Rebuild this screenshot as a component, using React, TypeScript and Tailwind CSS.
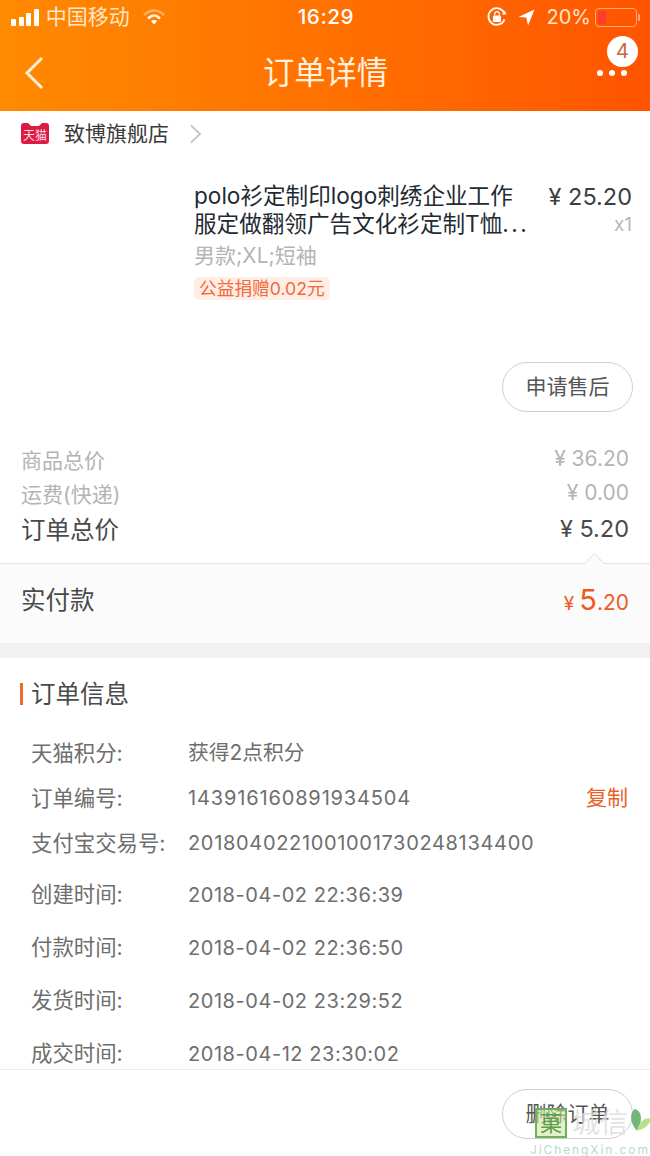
import React from "react";

const font = { fontFamily: '"Inter","Noto Sans CJK SC",sans-serif' };

function StatusBar() {
  return (
    <div className="flex h-[34px] items-center pl-[11px] pr-[10px] text-white">
      <div className="flex h-[18px] items-end gap-[2.6px]">
        <span className="h-[7px] w-[5px] rounded-[1px] bg-white" />
        <span className="h-[9px] w-[5px] rounded-[1px] bg-white" />
        <span className="h-[13px] w-[5px] rounded-[1px] bg-white" />
        <span className="h-[17px] w-[5px] rounded-[1px] bg-white" />
      </div>
      <span className="ml-[7px] text-[21px] leading-[24px] text-[#ffe6c8]">中国移动</span>
      <svg className="ml-[12px]" width="24" height="18" viewBox="0 0 24 18" fill="none">
        <path d="M2 7 C8 1 16 1 22 7" stroke="#ffb060" strokeWidth="2.5" />
        <path d="M6 10.5 C10 6.5 14 6.5 18 10.5" stroke="#fff3e0" strokeWidth="2.5" />
        <path d="M9 13 L12 16.5 L15 13 C13 11.5 11 11.5 9 13Z" fill="#fff" />
      </svg>
      <span className="ml-[132px] text-[20.7px] leading-[24px] font-medium tracking-[0.5px]">16:29</span>
      <div className="ml-auto flex items-center">
        <svg width="22" height="22" viewBox="0 0 22 22" fill="none">
          <path d="M18.5 13.5 A8.3 8.3 0 1 1 18 6.5" stroke="#fff" strokeWidth="1.8" />
          <path d="M20.5 8.5 H16 L18.8 4.8Z" fill="#fff" />
          <rect x="7" y="9.5" width="8" height="6.5" rx="1" fill="#fff" />
          <path d="M8.7 9.5 V8 a2.3 2.3 0 0 1 4.6 0 V9.5" stroke="#fff" strokeWidth="1.2" />
        </svg>
        <svg className="ml-[10px]" width="17" height="17" viewBox="0 0 17 17">
          <path d="M0.5 8 L16.5 0.5 L10 16.5 L8.3 8.6Z" fill="#fff" />
        </svg>
        <span className="ml-[12px] text-[20px] leading-[24px] text-[#ffe6c8]">20%</span>
        <div className="ml-[4px] flex items-center">
          <div className="flex h-[19px] w-[42px] items-stretch rounded-[4px] border border-[#ffa878] p-[2px]">
            <span className="w-[8px] rounded-[1px] bg-[#ff3b30]" />
          </div>
          <span className="ml-[1px] h-[7px] w-[2px] rounded-r-[1px] bg-[#ffa878]" />
        </div>
      </div>
    </div>
  );
}

function NavBar() {
  return (
    <div className="relative flex h-[77px] items-center justify-between pl-[24px] pr-[23px]">
      <div className="w-[30px]">
        <svg width="22" height="34" viewBox="0 0 22 34" fill="none">
          <path d="M18 2 L3 17 L18 32" stroke="#ffeedd" strokeWidth="3" />
        </svg>
      </div>
      <span className="text-[31.3px] leading-[40px] text-[#fff1df]">订单详情</span>
      <div className="relative flex w-[30px] gap-[6px]">
        <span className="h-[6px] w-[6px] rounded-full bg-white" />
        <span className="h-[6px] w-[6px] rounded-full bg-white" />
        <span className="h-[6px] w-[6px] rounded-full bg-white" />
        <span className="absolute left-[10px] top-[-34px] flex h-[31px] w-[31px] items-center justify-center rounded-full bg-white text-[20px] text-[#c8653a]">
          4
        </span>
      </div>
    </div>
  );
}

function TmallIcon() {
  return (
    <div className="relative flex h-[21px] w-[28px] items-end justify-center rounded-[3px] bg-[#dc1a42]">
      <span className="absolute left-[6px] top-[-1px] h-[4px] w-[16px] bg-white [clip-path:polygon(0_0,25%_100%,75%_100%,100%_0,100%_0,0_0)]" />
      <span className="text-[12px] leading-[17px] text-[#ffdbe2]">天猫</span>
    </div>
  );
}

function PriceRow({ label, value }: { label: string; value: string }) {
  return (
    <div className="flex h-[34px] items-center justify-between">
      <span className="pt-[3px] text-[21px] text-[#b4b4b4]">{label}</span>
      <span className="text-[21px] text-[#b4b4b4]">{value}</span>
    </div>
  );
}

function InfoRow({
  label,
  value,
  h,
  valueClass,
  action,
}: {
  label: string;
  value: string;
  h: string;
  valueClass: string;
  action?: string;
}) {
  return (
    <div className={`flex items-center ${h}`}>
      <span className="w-[157px] shrink-0 whitespace-nowrap text-[21.4px] text-[#6e6e6e]">{label}</span>
      <span className={`text-[#6e6e6e] ${valueClass}`}>{value}</span>
      {action && <span className="ml-auto text-[21px] text-[#e8622a]">{action}</span>}
    </div>
  );
}

const numberClass = "text-[20px] tracking-[0.85px]";
const longClass = "text-[20px] tracking-[0.67px]";
const dateClass = "text-[20px] tracking-[0.55px]";

export default function App() {
  return (
    <div className="relative h-[1156px] w-[650px] overflow-hidden bg-white" style={font}>
      <header className="h-[111px] bg-gradient-to-r from-[#ff8a00] to-[#ff5400]">
        <StatusBar />
        <NavBar />
      </header>

      <div className="flex h-[47px] items-center pb-[2px] pl-[21px]">
        <TmallIcon />
        <span className="ml-[15px] text-[21px] leading-[28px] text-[#3a3a3a]">致博旗舰店</span>
        <svg className="ml-[20px]" width="14" height="20" viewBox="0 0 14 20" fill="none">
          <path d="M2 1.5 L11 10 L2 18.5" stroke="#c8c8c8" strokeWidth="2" />
        </svg>
      </div>

      <div className="flex h-[204px] pl-[194px] pr-[18px] pt-[24px]">
        <div className="w-[345px]">
          <p className="whitespace-nowrap text-[22.6px] leading-[28px] text-[#1f2a33]">polo衫定制印logo刺绣企业工作</p>
          <p className="whitespace-nowrap text-[22.6px] leading-[28px] text-[#1f2a33]">
            服定做翻领广告文化衫定制T恤<span className="tracking-[2.5px]">...</span>
          </p>
          <p className="mt-[4px] text-[21px] leading-[28px] text-[#b4b4b4]">男款;XL;短袖</p>
          <span className="mt-[7px] inline-block rounded-[5px] bg-[#ffeee6] px-[5px] text-[17.7px] leading-[23px] text-[#f2693a]">
            公益捐赠0.02元
          </span>
        </div>
        <div className="ml-auto flex flex-col items-end pt-[1px]">
          <span className="whitespace-nowrap text-[23.5px] leading-[28px] text-[#3a3f45]">¥ 25.20</span>
          <span className="text-[19px] leading-[28px] text-[#b8b8b8]">x1</span>
        </div>
      </div>

      <div className="flex justify-end pr-[17px]">
        <button className="h-[50px] w-[131px] rounded-full border border-[#cfcfcf] text-[21px] text-[#555]">
          申请售后
        </button>
      </div>

      <div className="px-[21px] pt-[30px]">
        <PriceRow label="商品总价" value="¥ 36.20" />
        <PriceRow label="运费(快递)" value="¥ 0.00" />
        <div className="flex h-[38px] items-center justify-between">
          <span className="pt-[3px] text-[24.5px] text-[#4a4a4a]">订单总价</span>
          <span className="text-[23.5px] text-[#4a4a4a]">¥ 5.20</span>
        </div>
      </div>

      <div className="relative mt-[15px] flex h-[80px] items-center justify-between border-t border-[#e6e6e6] bg-[#fbfbfb] pb-[6px] pl-[21px] pr-[21px]">
        <span className="absolute right-[48px] top-[-8px] h-[15px] w-[15px] rotate-45 border-l border-t border-[#e6e6e6] bg-[#fbfbfb]" />
        <span className="text-[24.5px] text-[#4a4a4a]">实付款</span>
        <span className="flex items-baseline text-[#ee5a1f]">
          <span className="text-[19px]">¥</span>
          <span className="ml-[5px] text-[29px] leading-[34px]">5</span>
          <span className="text-[21px]">.20</span>
        </span>
      </div>

      <div className="h-[15px] bg-[#f1f1f1]" />

      <div className="flex h-[71px] items-center pl-[20px] pt-[1px]">
        <span className="h-[22px] w-[3px] bg-[#ec6a2a]" />
        <span className="ml-[8px] text-[24.5px] text-[#4a4a4a]">订单信息</span>
      </div>

      <div className="pl-[31px] pr-[22px]">
        <InfoRow label="天猫积分:" value="获得2点积分" h="h-[45px] pt-[3px]" valueClass="text-[20.8px]" />
        <InfoRow label="订单编号:" value="143916160891934504" h="h-[45px] pt-[3px]" valueClass={numberClass} action="复制" />
        <InfoRow label="支付宝交易号:" value="2018040221001001730248134400" h="h-[45px] pt-[3px]" valueClass={longClass} />
        <InfoRow label="创建时间:" value="2018-04-02 22:36:39" h="h-[53px] pt-[8px]" valueClass={dateClass} />
        <InfoRow label="付款时间:" value="2018-04-02 22:36:50" h="h-[53px] pt-[8px]" valueClass={dateClass} />
        <InfoRow label="发货时间:" value="2018-04-02 23:29:52" h="h-[53px] pt-[8px]" valueClass={dateClass} />
        <InfoRow label="成交时间:" value="2018-04-12 23:30:02" h="h-[53px] pt-[8px]" valueClass={dateClass} />
      </div>

      <div className="absolute inset-x-0 bottom-0 flex h-[87px] justify-end border-t border-[#ececec] bg-white pr-[17px] pt-[19px]">
        <button className="h-[50px] w-[131px] rounded-full border border-[#cfcfcf] text-[21px] text-[#555]">
          删除订单
        </button>
      </div>

      {/* watermark */}
      <div className="pointer-events-none absolute bottom-0 right-0 flex w-[120px] flex-col items-start">
        <div className="flex items-center pl-[5px]">
          <span className="flex h-[30px] w-[32px] items-center justify-center border-2 border-[#6fae5a] bg-[#cfe9a0]/60 text-[22px] leading-none text-[#5c9c4c]">
            菓
          </span>
          <span className="ml-[5px] text-[28px] leading-[30px] text-[#dcdcdc]/80">城信</span>
          <svg className="absolute right-[-2px] top-[0px]" width="24" height="28" viewBox="0 0 22 26">
            <path d="M6 1 C14 3 13 14 8 21 C3 16 0 6 6 1Z" fill="#74b57a" />
            <path d="M8 21 C10 14 15 8 21 10 C20 16 15 20 8 21Z" fill="#b9e08a" />
          </svg>
        </div>
        <span className="mt-[5px] whitespace-nowrap text-[12px] leading-[13px] tracking-[1.9px] text-[#b9d9cc]">JiChengXin.com</span>
      </div>
    </div>
  );
}
